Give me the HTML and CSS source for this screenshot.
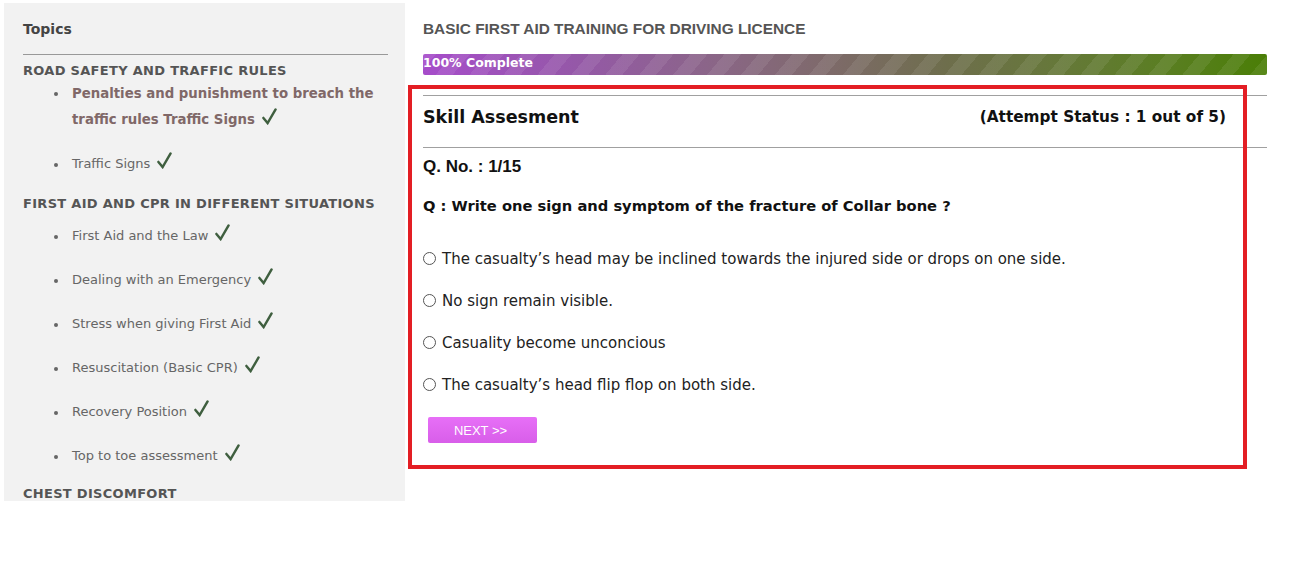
FILE: index.html
```html
<!DOCTYPE html>
<html>
<head>
<meta charset="utf-8">
<link rel="stylesheet" href="styles.css">
</head>
<body>
<div class="page">
  <aside class="sidebar">
    <h3 class="topics">Topics</h3>
    <div class="section">ROAD SAFETY AND TRAFFIC RULES</div>
    <ul class="items first">
      <li class="active"><span>Penalties and punishment to breach the traffic rules Traffic Signs</span><svg class="chk" viewBox="0 0 16 18"><path d="M1.5 10.5 L6 16 L14.5 1.5"/></svg></li>
      <li>Traffic Signs<svg class="chk" viewBox="0 0 16 18"><path d="M1.5 10.5 L6 16 L14.5 1.5"/></svg></li>
    </ul>
    <div class="section">FIRST AID AND CPR IN DIFFERENT SITUATIONS</div>
    <ul class="items second">
      <li>First Aid and the Law<svg class="chk" viewBox="0 0 16 18"><path d="M1.5 10.5 L6 16 L14.5 1.5"/></svg></li>
      <li>Dealing with an Emergency<svg class="chk" viewBox="0 0 16 18"><path d="M1.5 10.5 L6 16 L14.5 1.5"/></svg></li>
      <li>Stress when giving First Aid<svg class="chk" viewBox="0 0 16 18"><path d="M1.5 10.5 L6 16 L14.5 1.5"/></svg></li>
      <li>Resuscitation (Basic CPR)<svg class="chk" viewBox="0 0 16 18"><path d="M1.5 10.5 L6 16 L14.5 1.5"/></svg></li>
      <li>Recovery Position<svg class="chk" viewBox="0 0 16 18"><path d="M1.5 10.5 L6 16 L14.5 1.5"/></svg></li>
      <li>Top to toe assessment<svg class="chk" viewBox="0 0 16 18"><path d="M1.5 10.5 L6 16 L14.5 1.5"/></svg></li>
    </ul>
    <div class="section">CHEST DISCOMFORT</div>
  </aside>
  <main class="main">
    <h2 class="course">BASIC FIRST AID TRAINING FOR DRIVING LICENCE</h2>
    <div class="progress"><div class="bar">100% Complete</div></div>
    <div class="quiz">
      <hr class="rule">
      <div class="quiz-head">
        <h3 class="quiz-title">Skill Assesment</h3>
        <span class="attempt">(Attempt Status : 1 out of 5)</span>
      </div>
      <hr class="rule">
      <div class="qno">Q. No. : 1/15</div>
      <div class="question">Q : Write one sign and symptom of the fracture of Collar bone ?</div>
      <div class="options">
        <label class="opt"><span class="radio"></span>The casualty’s head may be inclined towards the injured side or drops on one side.</label>
        <label class="opt"><span class="radio"></span>No sign remain visible.</label>
        <label class="opt"><span class="radio"></span>Casuality become unconcious</label>
        <label class="opt"><span class="radio"></span>The casualty’s head flip flop on both side.</label>
      </div>
      <button class="next">NEXT &gt;&gt;</button>
    </div>
    <div class="highlight"></div>
  </main>
</div>
</body>
</html>
```

FILE: styles.css
```css
html, body {
  margin: 0;
  padding: 0;
  background: #fff;
}
.page {
  display: flex;
  align-items: flex-start;
  padding: 3px 0 0 4px;
  position: relative;
}
.sidebar {
  width: 365px;
  height: 478px;
  overflow: hidden;
  background: #f2f2f2;
  padding: 20px 17px 0 19px;
  font-family: Verdana, "DejaVu Sans", sans-serif;
  flex: none;
}
.topics {
  margin: 0;
  font-size: 14px;
  font-weight: bold;
  color: #444;
  padding-bottom: 19px;
  border-bottom: 1px solid #999;
  line-height: 12px;
}
.section {
  font-size: 13px;
  font-weight: bold;
  color: #555;
  margin-top: 9px;
  line-height: 14px;
  letter-spacing: 0.3px;
}
.items {
  margin: 0;
  padding: 0 0 0 49px;
  list-style: none;
  color: #666;
  font-size: 13px;
}
.items.first {
  margin-top: 3px;
  margin-bottom: 20px;
}
.items.second {
  margin-top: 12px;
}
.items li {
  line-height: 26px;
  margin-bottom: 18px;
  position: relative;
}
.items li::before {
  content: "";
  position: absolute;
  left: -18px;
  top: 12px;
  width: 4px;
  height: 4px;
  border-radius: 50%;
  background: #666;
}
.items li.active {
  color: #806868;
  font-weight: bold;
  font-size: 13.3px;
}
.items li.active::before {
  top: 11px;
}
.items li:last-child {
  margin-bottom: 18px;
}
.chk {
  width: 15px;
  height: 17px;
  margin-left: 7px;
  vertical-align: -1px;
  fill: none;
  stroke: #3f5f3f;
  stroke-width: 2.6;
  stroke-linecap: round;
  stroke-linejoin: miter;
}
.main {
  flex: 1;
  padding: 17px 37px 0 18px;
  position: relative;
  min-width: 0;
}
.course {
  margin: 0;
  font-family: "Liberation Sans", Arial, sans-serif;
  font-size: 15.4px;
  font-weight: bold;
  color: #555;
  line-height: 17px;
}
.progress {
  margin-top: 17px;
  height: 21px;
  background: #f5f5f5;
  border-radius: 2px;
  overflow: hidden;
}
.bar {
  height: 100%;
  width: 100%;
  background:
    repeating-linear-gradient(-50deg, rgba(255,255,255,0.08) 0 13px, rgba(255,255,255,0) 13px 26px),
    linear-gradient(to right, #a64cca 0%, #9558a8 18%, #8a6686 35%, #7e6a6a 48%, #6e6e4c 62%, #66783a 75%, #5a7e22 88%, #4a7e06 100%);
  color: #fff;
  font-family: Verdana, "DejaVu Sans", sans-serif;
  font-size: 12.5px;
  font-weight: bold;
  line-height: 18px;
}
.quiz {
  padding-top: 20px;
}
.rule {
  margin: 0;
  border: 0;
  border-top: 1px solid #a0a0a0;
  height: 0;
}
.quiz-head {
  display: flex;
  justify-content: space-between;
  align-items: center;
  height: 41px;
  padding-bottom: 10px;
  font-family: Verdana, "DejaVu Sans", sans-serif;
  color: #111;
}
.quiz-title {
  margin: 0;
  font-size: 17.5px;
  font-weight: bold;
}
.attempt {
  font-size: 15.3px;
  font-weight: bold;
  margin-right: 41px;
  margin-top: 1px;
}
.qno {
  margin-top: 10px;
  font-family: "Liberation Sans", Arial, sans-serif;
  font-size: 17px;
  font-weight: bold;
  color: #111;
  line-height: 18px;
}
.question {
  margin-top: 21px;
  font-family: Verdana, "DejaVu Sans", sans-serif;
  font-size: 14.7px;
  font-weight: bold;
  color: #111;
  line-height: 18px;
}
.options {
  margin-top: 35px;
  display: flex;
  flex-direction: column;
  gap: 24px;
}
.opt {
  display: flex;
  align-items: center;
  font-family: Verdana, "DejaVu Sans", sans-serif;
  font-size: 15px;
  color: #222;
  line-height: 18px;
}
.radio {
  width: 11px;
  height: 11px;
  border: 1px solid #555;
  border-radius: 50%;
  margin-right: 6px;
  margin-top: -2px;
  flex: none;
  background: #fff;
}
.next {
  margin: 23px 0 0 5px;
  width: 109px;
  height: 26px;
  border: 0;
  border-radius: 2px;
  background: linear-gradient(to bottom, #e76ff7, #d85ee9);
  color: #fff;
  font-family: "Liberation Sans", Arial, sans-serif;
  font-size: 13px;
  padding: 0 4px 0 0;
  display: block;
}
.highlight {
  position: absolute;
  left: 3px;
  top: 82px;
  width: 831px;
  height: 376px;
  border: 4px solid #e31e24;
  pointer-events: none;
}
```
